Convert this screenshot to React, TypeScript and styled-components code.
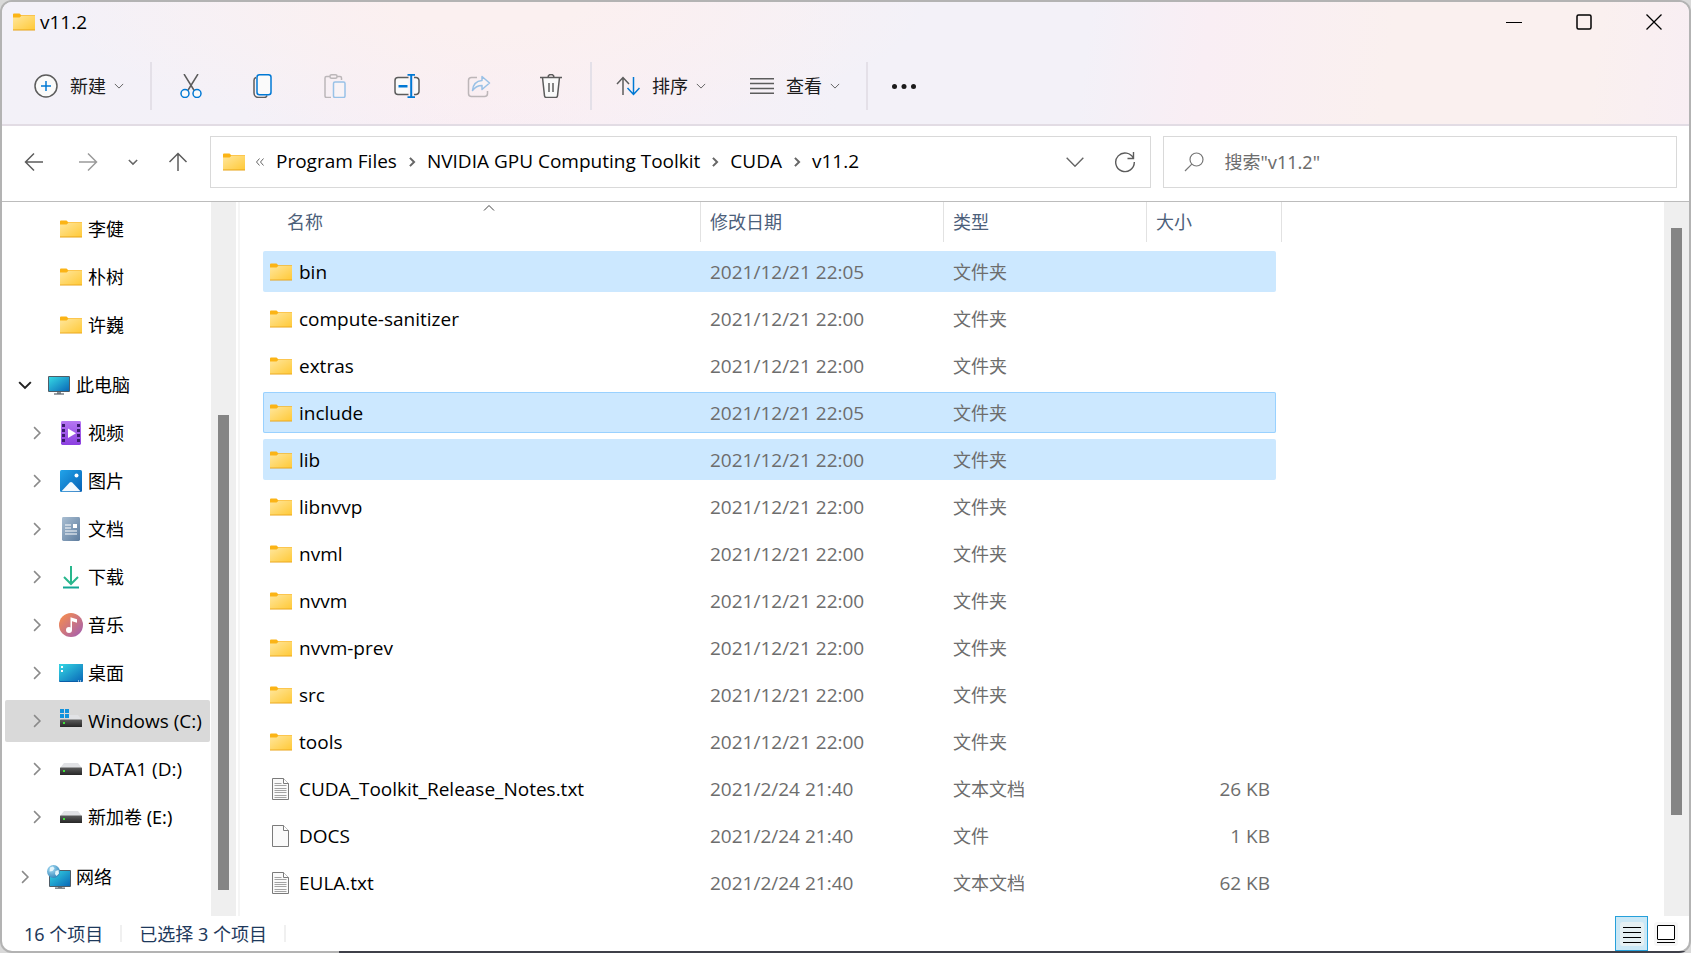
import React from "react";
import styled, { createGlobalStyle, css } from "styled-components";

const GlobalStyle = createGlobalStyle`
  *, *::before, *::after { box-sizing: border-box; }
  body {
    margin: 0;
    background: #d9d9d9;
    color: #000;
    font-family: "Noto Sans", "Noto Sans CJK SC", sans-serif;
    font-size: 18px;
    line-height: 24px;
  }
  button, input { font: inherit; color: inherit; }
  svg { display: block; flex: none; }
`;

const latinText = css`
  font-family: "Open Sans", "Noto Sans CJK SC", sans-serif;
  font-size: 19px;
`;

/* ---------- window ---------- */

const Frame = styled.div`
  display: flex;
  min-height: 100vh;
  padding: 2px;
  border-radius: 12px;
  background:
    linear-gradient(#3f4049, #3f4049) right bottom / calc(100% - 339px) 2px no-repeat,
    #b3b3b3;
`;

const Window = styled.div`
  flex: 1;
  min-width: 0;
  display: flex;
  flex-direction: column;
  overflow: hidden;
  border-radius: 10px;
  background: #fff;
`;

const Header = styled.header`
  border-bottom: 2px solid #e2dce4;
  background:
    radial-gradient(ellipse 26% 110% at 29% 0, #fbf0f0 20%, #f9eef500 100%),
    linear-gradient(97deg, #f3f1f8 0%, #f4f1f8 15%, #f9eef4 28%, #f8eff5 36%, #f3f1f8 50%, #f3f1f8 64%, #f9eef4 71%, #faf0ef 82%, #faf0ef 94%, #f8eef3 100%);
`;

const TitleBar = styled.div`
  display: flex;
  justify-content: space-between;
  height: 42px;
`;

const Title = styled.h1`
  ${latinText}
  display: flex;
  align-items: center;
  gap: 4px;
  height: 40px;
  margin: 0;
  padding-left: 10px;
  font-weight: 400;
`;

const PlainButton = styled.button`
  display: flex;
  align-items: center;
  justify-content: center;
  padding: 0;
  border: 0;
  background: none;
`;

const WindowControls = styled.div`
  display: flex;
  height: 40px;
`;

const ControlButton = styled(PlainButton)`
  width: 70px;
`;

const Toolbar = styled.div`
  display: flex;
  align-items: center;
  height: 80px;
  padding: 4px 20px 0;
`;

const Divider = styled.span`
  width: 2px;
  height: 48px;
  margin: 0 12px 0 14px;
  background: #e4e0e8;
`;

const MenuButton = styled(PlainButton)`
  gap: 8px;
  height: 48px;
  padding: 0 12px;
  color: #1b1b1b;
  & + & { margin-left: 20px; }
`;

const MenuLabel = styled.span`
  margin-left: 4px;
`;

const IconGroup = styled.div`
  display: flex;
  gap: 24px;
  padding: 0 1px 0 3px;
`;

const IconButton = styled(PlainButton)`
  width: 48px;
  height: 48px;
  &:disabled { opacity: 0.38; }
`;

/* ---------- navigation row ---------- */

const NavRow = styled.div`
  display: flex;
  align-items: center;
  gap: 10px;
  padding: 10px 12px 13px 10px;
  border-bottom: 1px solid #bcbcbc;
`;

const NavButton = styled(PlainButton)<{ $narrow?: boolean }>`
  width: ${(p) => (p.$narrow ? 26 : 44)}px;
  height: 52px;
`;

const AddressBar = styled.nav`
  flex: 17 1 0;
  display: flex;
  align-items: center;
  gap: 10px;
  height: 52px;
  padding-left: 11px;
  border: 1px solid #d9d9d9;
`;

const Crumb = styled.a`
  ${latinText}
  padding-bottom: 2px;
  color: #000;
  text-decoration: none;
  white-space: nowrap;
`;

const AddressActions = styled.div`
  display: flex;
  margin-left: auto;
`;

const AddressButton = styled(PlainButton)`
  width: 50px;
  height: 50px;
`;

const SearchBox = styled.label`
  flex: 9 1 0;
  display: flex;
  align-items: center;
  gap: 20px;
  height: 52px;
  margin-left: 2px;
  padding-left: 20px;
  border: 1px solid #d9d9d9;
`;

const SearchInput = styled.input`
  flex: 1;
  min-width: 0;
  padding: 0;
  border: 0;
  outline: 0;
  background: none;
  &::placeholder { color: #6d6d6d; opacity: 1; }
`;

/* ---------- body ---------- */

const Body = styled.div`
  flex: 1;
  display: flex;
`;

const Sidebar = styled.aside`
  width: 209px;
  padding-top: 6px;
`;

const Tree = styled.ul`
  display: flex;
  flex-direction: column;
  gap: 6px;
  margin: 0;
  padding: 0 1px 18px 3px;
  list-style: none;
`;

const TreeLink = styled.a<{ $child?: boolean; $active?: boolean }>`
  display: flex;
  align-items: center;
  height: 42px;
  padding-left: ${(p) => (p.$child ? 20 : 8)}px;
  border-radius: 2px;
  background: ${(p) => (p.$active ? "#d9d9d9" : "none")};
  color: #000;
  text-decoration: none;
  white-space: nowrap;
`;

const Twisty = styled.span`
  display: flex;
  justify-content: center;
  width: 24px;
  margin-right: 10px;
`;

const TreeLabel = styled.span<{ $latin?: boolean }>`
  ${(p) => p.$latin && latinText}
  margin-left: 5px;
`;

const ScrollTrack = styled.div<{ $offset: number }>`
  flex: none;
  width: 25px;
  padding: ${(p) => p.$offset}px 7px 0;
  background: #efefef;
`;

const ScrollThumb = styled.div<{ $size: number }>`
  height: ${(p) => p.$size}px;
  background: #858585;
`;

const Listing = styled.main`
  flex: 1;
  min-width: 0;
  margin-left: 2px;
  padding: 0 0 13px 23px;
  border-left: 2px solid #f5f5f5;
`;

const FileTable = styled.table`
  display: block;
`;

const TableHead = styled.thead`
  display: block;
`;

const columns = css`
  display: grid;
  grid-template-columns: 438px 243px 203px 1fr;
`;

const HeadRow = styled.tr`
  ${columns}
  width: 1019px;
`;

const HeadCell = styled.th<{ $first?: boolean }>`
  padding: 0 0 0 ${(p) => (p.$first ? 15 : 0)}px;
  font-weight: 400;
`;

const SortButton = styled(PlainButton)`
  position: relative;
  justify-content: flex-start;
  width: 100%;
  height: 40px;
  padding-left: 9px;
  border-right: 1px solid #e2e2e2;
  color: #4c607a;
`;

const SortMark = styled.span`
  position: absolute;
  top: 0;
  left: 50%;
  transform: translateX(-50%);
`;

const FileRows = styled.tbody`
  display: flex;
  flex-direction: column;
  gap: 6px;
  padding-top: 9px;
`;

const FileRow = styled.tr<{ $selected?: boolean; $focused?: boolean }>`
  ${columns}
  width: 1013px;
  height: 41px;
  align-items: center;
  border-radius: 2px;
  background: ${(p) => (p.$selected ? "#cce8ff" : "none")};
  box-shadow: ${(p) => (p.$focused ? "inset 0 0 0 1px #99d1ff" : "none")};
`;

const NameCell = styled.th`
  ${latinText}
  display: flex;
  align-items: center;
  gap: 6px;
  padding: 0 0 0 6px;
  font-weight: 400;
`;

const InfoCell = styled.td<{ $latin?: boolean; $right?: boolean }>`
  ${(p) => p.$latin && latinText}
  padding: ${(p) => (p.$right ? "0 6px 0 0" : "0 0 0 9px")};
  color: #6d6d6d;
  text-align: ${(p) => (p.$right ? "right" : "left")};
`;

/* ---------- status bar ---------- */

const StatusBar = styled.footer`
  display: flex;
  align-items: center;
  height: 35px;
  padding: 0 7px 0 22px;
  color: #1e395b;
`;

const StatusDivider = styled.span`
  width: 2px;
  height: 17px;
  margin: 0 17px;
  background: #f0f0f0;
`;

const ViewSwitch = styled.div`
  display: flex;
  gap: 1px;
  margin-left: auto;
`;

const ViewButton = styled(PlainButton)<{ $active?: boolean }>`
  width: 33px;
  height: 35px;
  border: 1px solid ${(p) => (p.$active ? "#26a0da" : "transparent")};
  background: ${(p) => (p.$active ? "#cbe8f6" : "none")};
`;

/* ---------- icons ---------- */

const FolderIcon = () => (
  <svg width="24" height="24" viewBox="0 0 24 24" aria-hidden="true">
    <defs>
      <linearGradient id="folder" x1="0" y1="0" x2="1" y2="1">
        <stop offset="0" stopColor="#ffe69b" />
        <stop offset="1" stopColor="#ffc937" />
      </linearGradient>
    </defs>
    <path d="M1 4.5a1 1 0 0 1 1-1h5.5l1.800 1.700H23v3H1z" fill="#fbb416" />
    <path d="M1 7.400h6.600l1.600-1.300H23V20H1z" fill="url(#folder)" />
    <path d="M1 19.600h22v.9H1z" fill="#e8a317" />
  </svg>
);

const PageIcon = ({ lines }: { lines?: boolean }) => (
  <svg width="24" height="24" viewBox="0 0 24 24" fill="none" aria-hidden="true">
    <path d="M3.5 1.5h11l5 5v16h-16z" fill="#fafafa" stroke="#7b7b7b" />
    <path d="M14.500 1.500v5h5" fill="#fff" stroke="#7b7b7b" />
    {lines && <path d="M5.500 6.500h7M5.500 8.500h12M5.500 11.500h12M5.500 13.500h12M5.500 15.500h12M5.500 18.500h12M5.500 20.500h12" stroke="#a3a3a3" />}
  </svg>
);

const chevronPaths = {
  down: "M1 3.500l5 5 5-5",
  up: "M1 8.500l5-5 5 5",
  right: "M3.500 1l5 5-5 5",
};

const Chevron = ({ dir = "down", size = 10, color = "#666", weight = 1 }: { dir?: keyof typeof chevronPaths; size?: number; color?: string; weight?: number }) => (
  <svg width={size} height={size} viewBox="0 0 12 12" fill="none" stroke={color} strokeWidth={(weight * 12) / size} aria-hidden="true">
    <path d={chevronPaths[dir]} />
  </svg>
);

const ComputerIcon = () => (
  <svg width="24" height="24" viewBox="0 0 24 24" aria-hidden="true">
    <defs>
      <linearGradient id="screen" x1="0" y1="0" x2="1" y2="1">
        <stop offset="0" stopColor="#35d8e4" />
        <stop offset="1" stopColor="#0a68b8" />
      </linearGradient>
    </defs>
    <path d="M10 18h4v3h-4z" fill="#8b9095" />
    <path d="M7 20.400h10v1.200H7z" fill="#596169" />
    <rect x="1" y="3" width="22" height="16" rx="1" fill="#4e5d68" />
    <rect x="2" y="4" width="20" height="14" fill="url(#screen)" />
  </svg>
);

const VideoIcon = () => (
  <svg width="24" height="24" viewBox="0 0 24 24" aria-hidden="true">
    <defs>
      <linearGradient id="video" x1="0" y1="0" x2="0" y2="1">
        <stop offset="0" stopColor="#b677f2" />
        <stop offset="1" stopColor="#8b3fe0" />
      </linearGradient>
    </defs>
    <rect x="2" y="0" width="20" height="24" rx="1.400" fill="url(#video)" />
    <path d="M4.500 3v19M19.500 3v19" stroke="#3d1d70" strokeWidth="3" strokeDasharray="3 2" />
    <path d="M9 7.500v9.500l8-4.800z" fill="#fff" />
  </svg>
);

const PictureIcon = () => (
  <svg width="24" height="24" viewBox="0 0 24 24" aria-hidden="true">
    <defs>
      <linearGradient id="sky" x1="0" y1="0" x2="1" y2="1">
        <stop offset="0" stopColor="#22a4ea" />
        <stop offset="1" stopColor="#0560b4" />
      </linearGradient>
    </defs>
    <rect x="1" y="1" width="22" height="22" rx="1.500" fill="url(#sky)" />
    <path d="M2.500 22.200l8.200-8.600q1.300-1.200 2.600 0l8.200 8.600z" fill="#f2f9fe" />
    <circle cx="17.500" cy="6.500" r="2" fill="#fff" />
  </svg>
);

const DocumentIcon = () => (
  <svg width="24" height="24" viewBox="0 0 24 24" aria-hidden="true">
    <defs>
      <linearGradient id="doc" x1="0" y1="0" x2="1" y2="1">
        <stop offset="0" stopColor="#a9bed2" />
        <stop offset="1" stopColor="#5d7c9e" />
      </linearGradient>
    </defs>
    <rect x="3" y="0" width="18" height="24" rx="1.400" fill="url(#doc)" />
    <path d="M6 8h6M6 11h6M6 14h12M6 17h12" stroke="#fff" strokeWidth="1.200" />
    <rect x="14" y="7" width="4" height="4" fill="#fff" />
  </svg>
);

const DownloadIcon = () => (
  <svg width="24" height="24" viewBox="0 0 24 24" fill="none" strokeWidth="2" aria-hidden="true">
    <path d="M12 1v18M5 12l7 7 7-7" stroke="#28b78d" />
    <path d="M4 22.500h16" stroke="#12a794" />
  </svg>
);

const MusicIcon = () => (
  <svg width="24" height="24" viewBox="0 0 24 24" aria-hidden="true">
    <defs>
      <linearGradient id="music" x1="0" y1="0" x2="1" y2="1">
        <stop offset="0.100" stopColor="#f38b52" />
        <stop offset="0.900" stopColor="#a861ab" />
      </linearGradient>
    </defs>
    <circle cx="12" cy="12" r="12" fill="url(#music)" />
    <circle cx="10" cy="17" r="3" fill="#fff" />
    <path d="M11.500 17V4.200l6.500 2v3.600l-5-1.600V17z" fill="#fff" />
  </svg>
);

const DesktopIcon = () => (
  <svg width="24" height="24" viewBox="0 0 24 24" aria-hidden="true">
    <rect x="0" y="3" width="24" height="18" rx="1" fill="#0a5ea8" />
    <rect x="0" y="3" width="24" height="17" rx="1" fill="url(#screen)" />
    <path d="M2 5h2v2H2zM2 9h2v2H2zM19 19.500h1v1h-1zM21 19.500h1v1h-1z" fill="#fff" />
  </svg>
);

const DriveIcon = ({ system }: { system?: boolean }) => (
  <svg width="24" height="24" viewBox="0 0 24 24" aria-hidden="true">
    <defs>
      <linearGradient id="drive" x1="0" y1="0" x2="0" y2="1">
        <stop offset="0" stopColor="#5c5c5c" />
        <stop offset="1" stopColor="#262626" />
      </linearGradient>
    </defs>
    <path d="M5 6h14l4 5H1z" fill="#e1e2e5" />
    <rect x="1" y="10.500" width="22" height="7.500" rx="0.600" fill="url(#drive)" />
    <rect x="4" y="13" width="2" height="2" fill="#3fe03a" />
    {system && (
      <>
        <path d="M1 0h9v10H1z" fill="#d9d9d9" />
        <path d="M1 0h4v4H1zM6 0h4v4H6zM1 5h4v4H1zM6 5h4v4H6z" fill="#1192dc" />
      </>
    )}
  </svg>
);

const NetworkIcon = () => (
  <svg width="24" height="24" viewBox="0 0 24 24" aria-hidden="true">
    <defs>
      <radialGradient id="globe" cx="0.350" cy="0.300" r="0.800">
        <stop offset="0" stopColor="#a9e0f7" />
        <stop offset="1" stopColor="#2a7db4" />
      </radialGradient>
    </defs>
    <path d="M11 21h4v2h-4z" fill="#8b9095" />
    <path d="M8 22.500h10v1.200H8z" fill="#596169" />
    <rect x="2" y="5" width="22" height="17" rx="1" fill="#4e5d68" />
    <rect x="3" y="6" width="20" height="15" fill="url(#screen)" />
    <circle cx="6.500" cy="6.500" r="6.500" fill="url(#globe)" />
    <path d="M3 2.500l3-1 1.500 2-2 2.500-3 .5zM8.500 6l3-1 .5 3.500-2.500 2.500-1.500-2z" fill="#e5f5fb" />
  </svg>
);

const stroke = { fill: "none", strokeWidth: 1.5, "aria-hidden": true } as const;

const NewIcon = () => (
  <svg width="24" height="24" viewBox="0 0 24 24" {...stroke}>
    <circle cx="12" cy="12" r="11" fill="#fafafa" stroke="#5c5c5c" />
    <path d="M12 7v10M7 12h10" stroke="#0078d4" />
  </svg>
);

const CutIcon = () => (
  <svg width="24" height="24" viewBox="0 0 24 24" {...stroke}>
    <path d="M5 0l10.500 17M19 0L8.500 17" stroke="#5c5c5c" />
    <circle cx="6" cy="19.500" r="4" stroke="#0078d4" fill="#fafafa" />
    <circle cx="18" cy="19.500" r="4" stroke="#0078d4" fill="#fafafa" />
  </svg>
);

const CopyIcon = () => (
  <svg width="24" height="24" viewBox="0 0 24 24" {...stroke}>
    <path d="M5 3.500a3 3 0 0 0-2 3V19a4.500 4.500 0 0 0 4.500 4.500H13a3 3 0 0 0 3-2" stroke="#5c5c5c" />
    <rect x="6" y="0.800" width="14" height="20" rx="2.500" stroke="#0078d4" fill="#fafafa" />
  </svg>
);

const PasteIcon = () => (
  <svg width="24" height="24" viewBox="0 0 24 24" {...stroke}>
    <path d="M7 2.500H3.500A1.500 1.500 0 0 0 2 4v18a1.500 1.500 0 0 0 1.500 1.500H8M14 2.500h3A1.500 1.500 0 0 1 18.500 4v2" stroke="#5c5c5c" />
    <rect x="7" y="0.800" width="7" height="3.500" rx="1.500" stroke="#5c5c5c" />
    <rect x="10.500" y="8" width="11.500" height="15.500" rx="1.500" stroke="#0078d4" fill="#fafafa" />
  </svg>
);

const RenameIcon = () => (
  <svg width="26" height="24" viewBox="0 0 26 24" {...stroke}>
    <path d="M14.500 3.500H4A3 3 0 0 0 1 6.500v11a3 3 0 0 0 3 3h10.500M20 3.500h2a3 3 0 0 1 3 3v11a3 3 0 0 1-3 3h-2" stroke="#5c5c5c" fill="#fafafa" />
    <path d="M4.500 12.200h9" stroke="#0078d4" strokeWidth="2.500" />
    <path d="M17.200 1v22M13.500 0.800h7.500M13.500 23.200h7.500" stroke="#0078d4" strokeWidth="2" />
  </svg>
);

const ShareIcon = () => (
  <svg width="24" height="24" viewBox="0 0 24 24" {...stroke}>
    <path d="M10 3.500H4.500A3 3 0 0 0 1.500 6.500v13a3 3 0 0 0 3 3h13a3 3 0 0 0 3-3V17" stroke="#5c5c5c" />
    <path d="M15 2.500l7.500 6.500-7.500 6.500v-4c-4 0-7 1.500-9.500 5 .5-6 4-9.500 9.500-10z" stroke="#0078d4" strokeLinejoin="round" fill="#fafafa" />
  </svg>
);

const DeleteIcon = () => (
  <svg width="24" height="24" viewBox="0 0 24 24" {...stroke}>
    <path d="M3.500 3.500l2 18.300a1.800 1.800 0 0 0 1.800 1.700h9.400a1.800 1.800 0 0 0 1.800-1.700l2-18.300" stroke="#5c5c5c" fill="#fafafa" />
    <path d="M1 3.500h22M9 3.500a3 3 0 0 1 6 0M10 9v9M14 9v9" stroke="#5c5c5c" />
  </svg>
);

const SortIcon = () => (
  <svg width="24" height="24" viewBox="0 0 24 24" {...stroke}>
    <path d="M7 21V4M1 10l6-6.500 6 6.500" stroke="#5c5c5c" />
    <path d="M17.500 3v17M11.500 14l6 6.500 6-6.500" stroke="#0078d4" />
  </svg>
);

const ViewIcon = () => (
  <svg width="24" height="24" viewBox="0 0 24 24" {...stroke}>
    <path d="M0 4.800h24M0 9.600h24M0 14.400h24M0 19.200h24" stroke="#5c5c5c" />
  </svg>
);

const MoreIcon = () => (
  <svg width="24" height="24" viewBox="0 0 24 24" fill="#1b1b1b" aria-hidden="true">
    <circle cx="2.500" cy="12.500" r="2.500" />
    <circle cx="12" cy="12.500" r="2.500" />
    <circle cx="21.500" cy="12.500" r="2.500" />
  </svg>
);

const ArrowIcon = ({ turn = 0, color = "#5c5c5c" }: { turn?: number; color?: string }) => (
  <svg width="20" height="20" viewBox="0 0 20 20" fill="none" stroke={color} strokeWidth="1.500" aria-hidden="true">
    <path d="M19 10H1.500M10 1.500L1.500 10l8.500 8.500" transform={`rotate(${turn} 10 10)`} />
  </svg>
);

const RefreshIcon = () => (
  <svg width="22" height="22" viewBox="0 0 22 22" fill="none" stroke="#5c5c5c" strokeWidth="1.400" aria-hidden="true">
    <path d="M19.500 7.500A9.300 9.300 0 1 0 20.300 11M19.500 1v6.500h-6" />
  </svg>
);

const SearchIcon = () => (
  <svg width="20" height="20" viewBox="0 0 20 20" fill="none" stroke="#777" strokeWidth="1.200" aria-hidden="true">
    <circle cx="12.500" cy="7.500" r="6.500" />
    <path d="M7.800 12.200L1 19" />
  </svg>
);

/* ---------- data ---------- */

type TreeItem = {
  label: string;
  icon: React.ReactNode;
  child?: boolean;
  twisty?: "right" | "down";
  active?: boolean;
  latin?: boolean;
};

const treeGroups: TreeItem[][] = [
  [
    { label: "李健", icon: <FolderIcon />, child: true },
    { label: "朴树", icon: <FolderIcon />, child: true },
    { label: "许巍", icon: <FolderIcon />, child: true },
  ],
  [
    { label: "此电脑", icon: <ComputerIcon />, twisty: "down" },
    { label: "视频", icon: <VideoIcon />, child: true, twisty: "right" },
    { label: "图片", icon: <PictureIcon />, child: true, twisty: "right" },
    { label: "文档", icon: <DocumentIcon />, child: true, twisty: "right" },
    { label: "下载", icon: <DownloadIcon />, child: true, twisty: "right" },
    { label: "音乐", icon: <MusicIcon />, child: true, twisty: "right" },
    { label: "桌面", icon: <DesktopIcon />, child: true, twisty: "right" },
    { label: "Windows (C:)", icon: <DriveIcon system />, child: true, twisty: "right", active: true, latin: true },
    { label: "DATA1 (D:)", icon: <DriveIcon />, child: true, twisty: "right", latin: true },
    { label: "新加卷 (E:)", icon: <DriveIcon />, child: true, twisty: "right" },
  ],
  [{ label: "网络", icon: <NetworkIcon />, twisty: "right" }],
];

type Entry = { name: string; date: string; kind: "文件夹" | "文本文档" | "文件"; size?: string; selected?: boolean; focused?: boolean };

const entries: Entry[] = [
  { name: "bin", date: "2021/12/21 22:05", kind: "文件夹", selected: true },
  { name: "compute-sanitizer", date: "2021/12/21 22:00", kind: "文件夹" },
  { name: "extras", date: "2021/12/21 22:00", kind: "文件夹" },
  { name: "include", date: "2021/12/21 22:05", kind: "文件夹", selected: true, focused: true },
  { name: "lib", date: "2021/12/21 22:00", kind: "文件夹", selected: true },
  { name: "libnvvp", date: "2021/12/21 22:00", kind: "文件夹" },
  { name: "nvml", date: "2021/12/21 22:00", kind: "文件夹" },
  { name: "nvvm", date: "2021/12/21 22:00", kind: "文件夹" },
  { name: "nvvm-prev", date: "2021/12/21 22:00", kind: "文件夹" },
  { name: "src", date: "2021/12/21 22:00", kind: "文件夹" },
  { name: "tools", date: "2021/12/21 22:00", kind: "文件夹" },
  { name: "CUDA_Toolkit_Release_Notes.txt", date: "2021/2/24 21:40", kind: "文本文档", size: "26 KB" },
  { name: "DOCS", date: "2021/2/24 21:40", kind: "文件", size: "1 KB" },
  { name: "EULA.txt", date: "2021/2/24 21:40", kind: "文本文档", size: "62 KB" },
];

const crumbs = ["Program Files", "NVIDIA GPU Computing Toolkit", "CUDA", "v11.2"];

/* ---------- page ---------- */

export default function App() {
  return (
    <>
      <GlobalStyle />
      <Frame>
        <Window>
          <Header>
            <TitleBar>
              <Title>
                <FolderIcon />
                v11.2
              </Title>
              <WindowControls>
                <ControlButton aria-label="最小化">
                  <svg width="16" height="16" stroke="#000"><path d="M0 8.500h16" /></svg>
                </ControlButton>
                <ControlButton aria-label="最大化">
                  <svg width="16" height="16" fill="none" stroke="#000" strokeWidth="1.500"><rect x="1" y="1" width="14" height="14" rx="1.500" /></svg>
                </ControlButton>
                <ControlButton aria-label="关闭">
                  <svg width="16" height="16" stroke="#000" strokeWidth="1.300"><path d="M0.500 0.500l15 15M15.500 0.500l-15 15" /></svg>
                </ControlButton>
              </WindowControls>
            </TitleBar>
            <Toolbar role="toolbar">
              <MenuButton><NewIcon /><MenuLabel>新建</MenuLabel><Chevron /></MenuButton>
              <Divider />
              <IconGroup>
                <IconButton aria-label="剪切"><CutIcon /></IconButton>
                <IconButton aria-label="复制"><CopyIcon /></IconButton>
                <IconButton aria-label="粘贴" disabled><PasteIcon /></IconButton>
                <IconButton aria-label="重命名"><RenameIcon /></IconButton>
                <IconButton aria-label="共享" disabled><ShareIcon /></IconButton>
                <IconButton aria-label="删除"><DeleteIcon /></IconButton>
              </IconGroup>
              <Divider />
              <MenuButton><SortIcon /><MenuLabel>排序</MenuLabel><Chevron /></MenuButton>
              <MenuButton><ViewIcon /><MenuLabel>查看</MenuLabel><Chevron /></MenuButton>
              <Divider />
              <IconButton aria-label="更多"><MoreIcon /></IconButton>
            </Toolbar>
          </Header>

          <NavRow>
            <NavButton aria-label="返回"><ArrowIcon /></NavButton>
            <NavButton aria-label="前进"><ArrowIcon turn={180} color="#9a9a9a" /></NavButton>
            <NavButton aria-label="最近的位置" $narrow><Chevron weight={1.5} /></NavButton>
            <NavButton aria-label="向上"><ArrowIcon turn={90} /></NavButton>
            <AddressBar aria-label="地址">
              <FolderIcon />
              <svg width="10" height="10" viewBox="0 0 10 10" fill="none" stroke="#666" aria-hidden="true">
                <path d="M3.500 1.500L0.500 5l3 3.500M7.500 1.500L4.500 5l3 3.500" />
              </svg>
              {crumbs.map((crumb, i) => (
                <React.Fragment key={crumb}>
                  {i > 0 && <Chevron dir="right" weight={2} />}
                  <Crumb href="#">{crumb}</Crumb>
                </React.Fragment>
              ))}
              <AddressActions>
                <AddressButton aria-label="以前的位置"><Chevron size={20} weight={1.4} /></AddressButton>
                <AddressButton aria-label="刷新"><RefreshIcon /></AddressButton>
              </AddressActions>
            </AddressBar>
            <SearchBox>
              <SearchIcon />
              <SearchInput type="text" aria-label="搜索" placeholder={'搜索"v11.2"'} />
            </SearchBox>
          </NavRow>

          <Body>
            <Sidebar>
              {treeGroups.map((group) => (
                <Tree key={group[0].label}>
                  {group.map((item) => (
                    <li key={item.label}>
                      <TreeLink href="#" $child={item.child} $active={item.active}>
                        <Twisty>
                          {item.twisty && (
                            <Chevron dir={item.twisty} size={14} weight={item.twisty === "down" ? 2 : 1.6} color={item.twisty === "down" ? "#222" : "#8a8a8a"} />
                          )}
                        </Twisty>
                        {item.icon}
                        <TreeLabel $latin={item.latin}>{item.label}</TreeLabel>
                      </TreeLink>
                    </li>
                  ))}
                </Tree>
              ))}
            </Sidebar>
            <ScrollTrack $offset={213}><ScrollThumb $size={475} /></ScrollTrack>
            <Listing>
              <FileTable>
                <TableHead>
                  <HeadRow>
                    <HeadCell $first scope="col">
                      <SortButton>名称<SortMark><Chevron dir="up" size={12} color="#444" /></SortMark></SortButton>
                    </HeadCell>
                    <HeadCell scope="col"><SortButton>修改日期</SortButton></HeadCell>
                    <HeadCell scope="col"><SortButton>类型</SortButton></HeadCell>
                    <HeadCell scope="col"><SortButton>大小</SortButton></HeadCell>
                  </HeadRow>
                </TableHead>
                <FileRows>
                  {entries.map((e) => (
                    <FileRow key={e.name} $selected={e.selected} $focused={e.focused}>
                      <NameCell scope="row">
                        {e.kind === "文件夹" ? <FolderIcon /> : <PageIcon lines={e.kind === "文本文档"} />}
                        {e.name}
                      </NameCell>
                      <InfoCell $latin>{e.date}</InfoCell>
                      <InfoCell>{e.kind}</InfoCell>
                      <InfoCell $latin $right>{e.size}</InfoCell>
                    </FileRow>
                  ))}
                </FileRows>
              </FileTable>
            </Listing>
            <ScrollTrack $offset={26}><ScrollThumb $size={587} /></ScrollTrack>
          </Body>

          <StatusBar>
            <span>16 个项目</span>
            <StatusDivider />
            <span>已选择 3 个项目</span>
            <StatusDivider />
            <ViewSwitch>
              <ViewButton $active aria-label="详细信息">
                <svg width="24" height="24" stroke="#000">
                  <rect width="24" height="24" rx="3" fill="#e6f0f3" stroke="none" />
                  <path d="M3 5.500h18M3 10.500h18M3 15.500h18M3 20.500h18" />
                </svg>
              </ViewButton>
              <ViewButton aria-label="大图标">
                <svg width="24" height="24" fill="none" stroke="#000">
                  <rect width="24" height="24" rx="3" fill="#f7f7f7" stroke="none" />
                  <rect x="3.500" y="3.500" width="17" height="14" rx="0.500" fill="#fff" />
                  <path d="M3 20.500h18" />
                </svg>
              </ViewButton>
            </ViewSwitch>
          </StatusBar>
        </Window>
      </Frame>
    </>
  );
}
